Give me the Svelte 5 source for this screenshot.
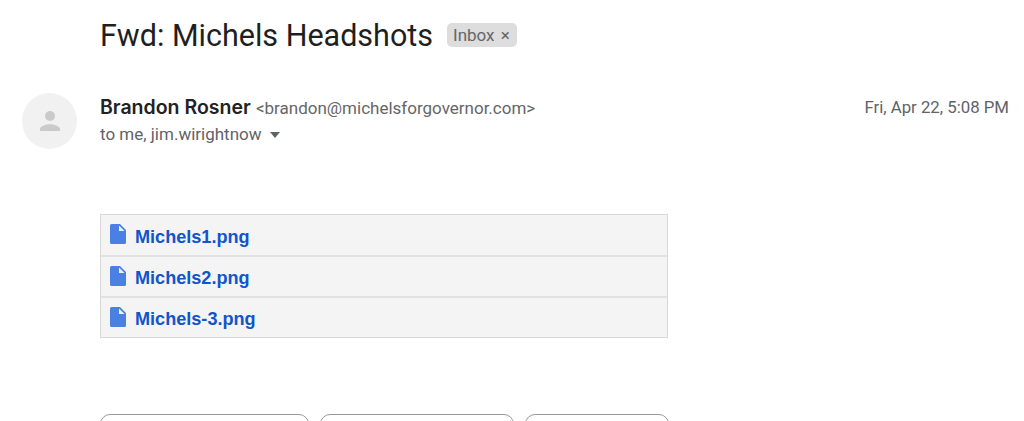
<script>
  const files = ['Michels1.png', 'Michels2.png', 'Michels-3.png'];
  const buttons = [209, 194, 144];
</script>

<div class="page">
  <div class="subject">
    <h1>Fwd: Michels Headshots</h1>
    <span class="label">Inbox <span class="x">×</span></span>
  </div>

  <div class="message-head">
    <div class="avatar">
      <svg viewBox="0 0 24 24" width="30" height="30">
        <circle cx="12" cy="8" r="4" fill="#cacaca" />
        <path d="M4 20v-1.500C4 15.800 9.300 14.500 12 14.500s8 1.300 8 4V20z" fill="#cacaca" />
      </svg>
    </div>
    <div class="who">
      <div class="sender"><b>Brandon Rosner</b> <span class="addr">&lt;brandon@michelsforgovernor.com&gt;</span></div>
      <div class="to">to me, jim.wirightnow <span class="caret"></span></div>
    </div>
    <div class="date">Fri, Apr 22, 5:08 PM</div>
  </div>

  <div class="attachments">
    {#each files as file}
      <div class="file">
        <svg viewBox="0 0 16 20" width="16" height="20">
          <path d="M1.500 0H10l6 6v12.500a1.500 1.500 0 0 1-1.500 1.500h-13A1.500 1.500 0 0 1 0 18.500V1.500A1.500 1.500 0 0 1 1.500 0z" fill="#4a80e4" />
          <path d="M9 1.500V7h5.500z" fill="#eef2fb" />
        </svg>
        <span>{file}</span>
      </div>
    {/each}
  </div>

  <div class="actions">
    {#each buttons as width}
      <div class="action" style="width: {width}px"></div>
    {/each}
  </div>
</div>

<style>
  :global(body) {
    margin: 0;
    background: #fff;
    overflow: hidden;
  }

  .page {
    height: 421px;
    overflow: hidden;
    box-sizing: border-box;
    padding: 15px 15px 0 22px;
    font-family: Roboto, "Liberation Sans", sans-serif;
    color: #222;
  }

  .subject {
    display: flex;
    align-items: center;
    gap: 14px;
    padding-left: 78px;
    height: 40px;
  }

  h1 {
    margin: 0;
    font-size: 30.500px;
    font-weight: 400;
    color: #1f1f1f;
  }

  .label {
    background: #ddd;
    color: #666;
    font-size: 17px;
    padding: 2px 7px 2px 6px;
    border-radius: 5px;
    line-height: 20px;
  }

  .x {
    margin-left: 2px;
  }

  .message-head {
    display: flex;
    margin-top: 38px;
    gap: 23px;
  }

  .avatar {
    width: 55px;
    height: 56px;
    border-radius: 50%;
    background: #f1f1f1;
    display: flex;
    align-items: center;
    justify-content: center;
  }

  .who {
    flex: 1;
    padding-top: 2px;
  }

  .sender {
    line-height: 24px;
    font-size: 17px;
    color: #666;
  }

  .sender b {
    font-family: Inter, Roboto, sans-serif;
    font-size: 19.500px;
    font-weight: 600;
    color: #222;
  }

  .addr {
    margin-left: 1px;
  }

  .to {
    margin-top: 3px;
    font-size: 17px;
    line-height: 22px;
    color: #5f6368;
  }

  .caret {
    display: inline-block;
    margin: 0 0 2px 4px;
    border: 5.500px solid transparent;
    border-top: 6px solid #5f6368;
    border-bottom: 0;
  }

  .date {
    padding-top: 2px;
    font-size: 16.800px;
    line-height: 24px;
    color: #5f6368;
  }

  .attachments {
    margin: 65px 0 0 78px;
    width: 566px;
    border: 1px solid #d8d8d8;
    background: #f4f4f4;
  }

  .file {
    display: flex;
    align-items: flex-start;
    gap: 9px;
    height: 40px;
    padding: 9px 0 0 9px;
    box-sizing: border-box;
    font-family: "Liberation Sans", Arial, sans-serif;
    font-size: 18.100px;
    line-height: 24px;
    font-weight: 700;
    color: #1155cc;
  }

  .file svg {
    flex: none;
  }

  .file:first-child span {
    margin-top: 1px;
  }

  .file + .file {
    border-top: 2px solid #e2e2e2;
    height: 41px;
  }

  .actions {
    display: flex;
    gap: 11px;
    margin: 76px 0 0 78px;
  }

  .action {
    height: 40px;
    box-sizing: border-box;
    border: 1px solid #999;
    border-radius: 10px;
  }
</style>
